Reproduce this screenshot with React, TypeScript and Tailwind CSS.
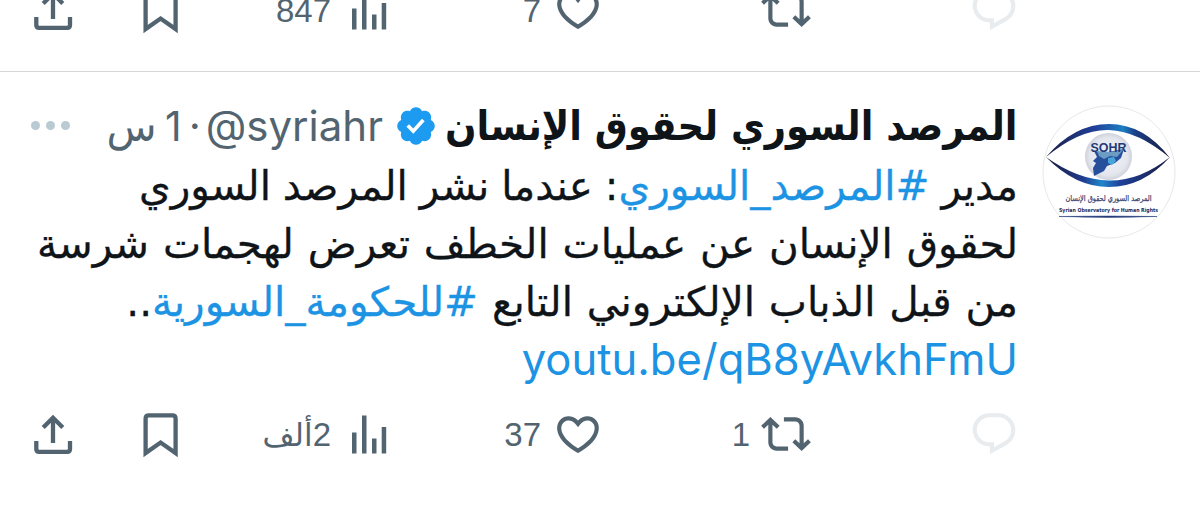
import React from 'react';

interface ActionBarProps {
    views: React.ReactNode;
    likes: string;
    reposts?: string;
}

interface IconProps {
    className?: string;
}

const ShareIcon: React.FC<IconProps> = ({ className }) => (
    <svg viewBox="0 0 48 48" className={className} fill="none" stroke="currentColor" strokeWidth="4.3">
        <path d="M24 33V8M14.200 17.500L24 7.700l9.800 9.800M7.300 31v8q0 2.800 2.800 2.800h28.100q2.800 0 2.800-2.800v-8" />
    </svg>
);

const BookmarkIcon: React.FC<IconProps> = ({ className }) => (
    <svg viewBox="0 0 48 48" className={className} fill="none" stroke="currentColor" strokeWidth="4.3">
        <path d="M8.600 43V8.600q0-3.300 3.300-3.300h23.400q3.300 0 3.300 3.300v34.400L23.600 32.500z" />
    </svg>
);

const ViewsIcon: React.FC<IconProps> = ({ className }) => (
    <svg viewBox="0 0 48 48" className={className} fill="currentColor">
        <path d="M7 22.500h4.500v21H7zM17 5.500h4.500v38H17zM27 28.500h4.500v15H27zM36.700 17h4.500v26.500h-4.500z" />
    </svg>
);

const HeartIcon: React.FC<IconProps> = ({ className }) => (
    <svg viewBox="0 0 24 24" className={className} fill="currentColor">
        <path d="M16.697 5.5c-1.222-.06-2.679.51-3.89 2.16l-.805 1.09-.806-1.09C9.984 6.01 8.526 5.44 7.304 5.5c-1.243.07-2.349.78-2.91 1.91-.552 1.12-.633 2.78.479 4.82 1.074 1.97 3.257 4.27 7.129 6.61 3.87-2.34 6.052-4.64 7.126-6.61 1.111-2.04 1.03-3.7.477-4.82-.561-1.13-1.666-1.84-2.908-1.91zm4.187 7.69c-1.351 2.48-4.001 5.12-8.379 7.67l-.503.3-.504-.3c-4.379-2.55-7.029-5.19-8.382-7.67-1.36-2.5-1.41-4.86-.514-6.67.887-1.79 2.647-2.91 4.601-3.01 1.651-.09 3.368.56 4.798 2.01 1.429-1.45 3.146-2.1 4.796-2.01 1.954.1 3.714 1.22 4.601 3.01.896 1.81.846 4.17-.514 6.67z" />
    </svg>
);

const RepostIcon: React.FC<IconProps> = ({ className }) => (
    <svg viewBox="0 0 24 24" className={className} fill="currentColor">
        <path d="M4.5 3.88l4.432 4.14-1.364 1.46L5.5 7.55V16c0 1.1.896 2 2 2H13v2H7.5c-2.209 0-4-1.79-4-4V7.55L1.432 9.48.068 8.02 4.5 3.88zM16.5 6H11V4h5.5c2.209 0 4 1.79 4 4v8.45l2.068-1.93 1.364 1.46-4.432 4.14-4.432-4.14 1.364-1.46 2.068 1.93V8c0-1.1-.896-2-2-2z" />
    </svg>
);

const ReplyIcon: React.FC<IconProps> = ({ className }) => (
    <svg viewBox="0 0 24 24" className={className} fill="currentColor">
        <path d="M1.751 10c0-4.42 3.584-8 8.005-8h4.366c4.49 0 8.129 3.64 8.129 8.13 0 2.96-1.607 5.68-4.196 7.11l-8.054 4.46v-3.69h-.067c-4.49.1-8.183-3.51-8.183-8.01zm8.005-6c-3.317 0-6.005 2.69-6.005 6 0 3.37 2.77 6.08 6.138 6.01l.351-.01h1.761v2.3l5.087-2.81c1.951-1.08 3.163-3.13 3.163-5.36 0-3.39-2.744-6.13-6.129-6.13H9.756z" />
    </svg>
);

const VerifiedIcon: React.FC<IconProps> = ({ className }) => (
    <svg viewBox="0 0 24 24" className={className} fill="currentColor">
        <path d="M22.25 12c0-1.43-.88-2.67-2.19-3.34.46-1.39.2-2.9-.81-3.91s-2.52-1.27-3.91-.81c-.66-1.31-1.91-2.19-3.34-2.19s-2.67.88-3.33 2.19c-1.4-.46-2.91-.2-3.92.81s-1.26 2.52-.8 3.91c-1.31.67-2.2 1.91-2.2 3.34s.89 2.67 2.2 3.34c-.46 1.39-.21 2.9.8 3.91s2.52 1.26 3.91.81c.67 1.31 1.91 2.19 3.34 2.19s2.68-.88 3.34-2.19c1.39.45 2.9.2 3.91-.81s1.27-2.52.81-3.91c1.31-.67 2.19-1.91 2.19-3.34zm-11.71 4.2L6.8 12.46l1.41-1.42 2.26 2.26 4.8-5.23 1.47 1.36-6.2 6.77z" />
    </svg>
);

const Avatar: React.FC = () => (
    <svg viewBox="0 0 134 134" className="h-[134px] w-[134px] shrink-0">
        <defs>
            <linearGradient id="lid-top" x1="0" x2="1">
                <stop offset="0" stopColor="#1b1f4b" />
                <stop offset=".4" stopColor="#20409a" />
                <stop offset=".62" stopColor="#1c7fc4" />
                <stop offset=".72" stopColor="#1c3f87" />
                <stop offset="1" stopColor="#171b3d" />
            </linearGradient>
            <linearGradient id="lid-bottom" x1="0" x2="1">
                <stop offset="0" stopColor="#171b3d" />
                <stop offset=".3" stopColor="#213c90" />
                <stop offset=".45" stopColor="#1d86cb" />
                <stop offset=".6" stopColor="#20409a" />
                <stop offset="1" stopColor="#171b3d" />
            </linearGradient>
            <radialGradient id="iris">
                <stop offset="0" stopColor="#f4f5f9" />
                <stop offset=".8" stopColor="#e4e6ee" />
                <stop offset="1" stopColor="#cfd2db" />
            </radialGradient>
        </defs>
        <circle cx="67" cy="67" r="66" fill="#fff" stroke="#e6e8ea" />
        <path d="M4 52Q32 19 67 19t61 34Q96 26 67 25T4 52z" fill="url(#lid-top)" />
        <path d="M4 52Q33 82 67 82t61-30Q98 76 67 75.500T4 52z" fill="url(#lid-bottom)" />
        <circle cx="66.500" cy="51.500" r="23.500" fill="url(#iris)" />
        <path d="M52 46l8 2 22-4-3 9-6 5-8 3-3 5-10 5-1-8 3-5-3-2 4-4z" fill="#27509c" />
        <path d="M55 46l13 1 13-2-6 7-7-1-6 3-5-3z" fill="#6b9cc4" />
        <path d="M66 53l6-1 2 4-4 4-4-2z" fill="#4aa5dc" />
        <text x="66.500" y="47" textAnchor="middle" textLength="36" lengthAdjust="spacingAndGlyphs" fontFamily="Liberation Sans" fontWeight="700" fontSize="12.500" fill="#223a78">SOHR</text>
        <text x="66.500" y="96" textAnchor="middle" textLength="86" lengthAdjust="spacingAndGlyphs" direction="rtl" fontFamily="DejaVu Sans" fontWeight="400" fontSize="8" fill="#3a4570" stroke="#3a4570" strokeWidth=".25">المرصد السوري لحقوق الإنسان</text>
        <text x="66.500" y="106.500" textAnchor="middle" textLength="99" lengthAdjust="spacingAndGlyphs" fontFamily="DejaVu Sans" fontWeight="700" fontSize="5.500" fill="#1d2a5c">Syrian Observatory for Human Rights</text>
        <path d="M17 111.500q50-1 98 0q-48 1.800-98 0z" fill="#223a78" stroke="#223a78" strokeWidth=".5" />
    </svg>
);

const ActionBar: React.FC<ActionBarProps> = ({ views, likes, reposts }) => (
    <div className="flex h-12 w-full shrink-0 items-center pl-[29px] font-['Liberation_Sans','DejaVu_Sans',sans-serif] text-[33px] leading-none text-[#536471]">
        <ShareIcon className="size-12 shrink-0" />
        <BookmarkIcon className="ml-[60px] size-12 shrink-0" />
        <div className="flex w-[208px] items-center justify-end gap-[14px]">
            <span className="whitespace-nowrap" dir="rtl">{views}</span>
            <ViewsIcon className="size-12 shrink-0" />
        </div>
        <div className="flex w-[210px] items-center justify-end gap-[12px]">
            <span>{likes}</span>
            <HeartIcon className="size-[50px] shrink-0" />
        </div>
        <div className="flex w-[208px] items-center justify-end gap-[11px]">
            <span>{reposts}</span>
            <RepostIcon className="size-[50px] shrink-0" />
        </div>
        <ReplyIcon className="ml-[158px] size-[50px] shrink-0 text-[#e8ecef]" />
    </div>
);

export default function App() {
    return (
        <div className="flex h-[526px] w-[1200px] flex-col overflow-hidden bg-white">
            {/* Previous post */}
            <div className="flex h-[72px] shrink-0 items-end border-b border-[#d3d7da] pb-[37px]">
                <ActionBar views="847" likes="7" />
            </div>

            <article>
                <div className="flex pt-[33px]">
                    <div className="flex h-[299px] w-[1018px] flex-col">
                        <header className="flex h-[41px] items-center pl-[31px]">
                            <div className="flex w-[42px] shrink-0 gap-[6px]">
                                <span className="size-[9px] rounded-full bg-[#b9cad3]" />
                                <span className="size-[9px] rounded-full bg-[#b9cad3]" />
                                <span className="size-[9px] rounded-full bg-[#b9cad3]" />
                            </div>
                            <div className="flex flex-1 items-center justify-end font-['Inter','DejaVu_Sans',sans-serif] text-[42px] leading-[42px] whitespace-nowrap text-[#536471]">
                                <span className="text-[41px] [word-spacing:-3px]" dir="rtl">1 س</span>
                                <span className="mr-[5px] ml-[7px]">·</span>
                                <span>@syriahr</span>
                            </div>
                            <VerifiedIcon className="mr-[8px] ml-[11px] size-[44px] shrink-0 text-[#1d9bf0]" />
                            <h2 className="w-[572px] shrink-0 font-['DejaVu_Sans',sans-serif] text-[41px] leading-[38px] font-bold whitespace-nowrap text-[#0f1419]" dir="rtl">
                                <span className="inline-block origin-right scale-x-[0.901]">المرصد السوري لحقوق الإنسان</span>
                            </h2>
                        </header>
                        <div className="mt-[11px] font-['DejaVu_Sans',sans-serif] text-[40.500px] leading-[58px] whitespace-nowrap text-[#0f1419] [-webkit-text-stroke:0.3px]" dir="rtl">
                            <p className="[word-spacing:-1px]">مدير <span className="text-[#1d93e3]">#المرصد_السوري</span>: عندما نشر المرصد السوري</p>
                            <p className="[word-spacing:1px]">لحقوق الإنسان عن عمليات الخطف تعرض لهجمات شرسة</p>
                            <p className="[word-spacing:1px]">من قبل الذباب الإلكتروني التابع <span className="text-[#1d93e3]">#للحكومة_السورية</span>..</p>
                            <p className="font-['Inter',sans-serif] text-[43.600px] text-[#1d93e3] [-webkit-text-stroke:0px]"><bdi>youtu.be/qB8yAvkhFmU</bdi></p>
                        </div>
                    </div>
                    <div className="ml-[24px]">
                        <Avatar />
                    </div>
                </div>
                <div className="mt-[6px]">
                    <ActionBar views={<>2<span className="text-[31px]">ألف</span></>} likes="37" reposts="1" />
                </div>
            </article>
        </div>
    );
}
